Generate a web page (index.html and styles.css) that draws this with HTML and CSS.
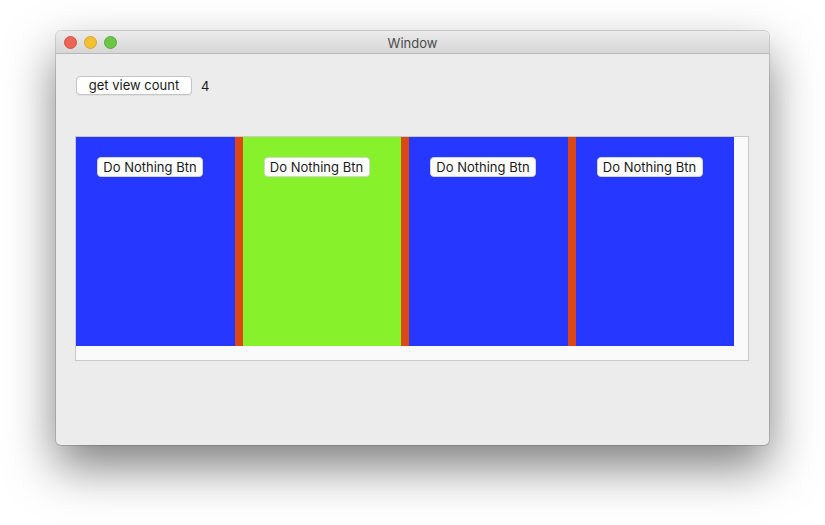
FILE: index.html
```html
<!DOCTYPE html>
<html>
<head>
<meta charset="utf-8">
<link rel="stylesheet" href="styles.css">
</head>
<body>
<div class="window">
  <div class="titlebar">
    <div class="lights">
      <span class="light red"></span>
      <span class="light yellow"></span>
      <span class="light green"></span>
    </div>
    <div class="title">Window</div>
  </div>
  <div class="content">
    <div class="toolbar">
      <button class="btn btn-count">get view count</button>
      <span class="count">4</span>
    </div>
    <div class="scrollview">
      <div class="stack">
        <div class="col blue"><button class="btn btn-do">Do Nothing Btn</button></div>
        <div class="sep"></div>
        <div class="col lime"><button class="btn btn-do">Do Nothing Btn</button></div>
        <div class="sep"></div>
        <div class="col blue"><button class="btn btn-do">Do Nothing Btn</button></div>
        <div class="sep"></div>
        <div class="col blue"><button class="btn btn-do">Do Nothing Btn</button></div>
      </div>
    </div>
  </div>
</div>
</body>
</html>
```

FILE: styles.css
```css
html, body {
  margin: 0;
  padding: 0;
  background: #ffffff;
}
body {
  width: 825px;
  height: 525px;
  overflow: hidden;
  padding: 31px 0 0 56px;
  box-sizing: border-box;
  font-family: Inter, "Liberation Sans", sans-serif;
  font-size: 13px;
  color: #1a1a1a;
}
.window {
  width: 713px;
  height: 414px;
  background: #ececec;
  border-radius: 5px;
  box-shadow: 0 0 0 1px rgba(0,0,0,0.14), 0 22px 48px rgba(0,0,0,0.5);
  overflow: hidden;
  display: flex;
  flex-direction: column;
}
.titlebar {
  height: 22px;
  background: linear-gradient(#ebebeb, #d6d6d6);
  border-bottom: 1px solid #b9b9b9;
  position: relative;
  display: flex;
  align-items: center;
  justify-content: center;
  flex-shrink: 0;
}
.lights {
  position: absolute;
  left: 8px;
  top: 5px;
  display: flex;
  gap: 7px;
}
.light {
  width: 13px;
  height: 13px;
  border-radius: 50%;
  box-sizing: border-box;
}
.red { background: #ec6559; border: 1px solid #d6503f; }
.yellow { background: #f3c031; border: 1px solid #d9a42a; }
.green { background: #6cc547; border: 1px solid #55ac36; }
.title {
  font-size: 13px;
  color: #4b4b4b;
  padding-top: 1px;
}
.content {
  padding: 22px 19px 0 19px;
}
.toolbar {
  display: flex;
  align-items: center;
  height: 19px;
}
.btn {
  font-family: Inter, "Liberation Sans", sans-serif;
  font-size: 13px;
  color: #1a1a1a;
  background: #ffffff;
  border: 1px solid #c4c4c4;
  border-radius: 4px;
  padding: 0;
  margin: 0;
  box-sizing: border-box;
  line-height: 1;
  display: flex;
  align-items: center;
  justify-content: center;
}
.btn-count {
  width: 116px;
  height: 19px;
  margin-left: 1px;
  box-shadow: 0 1px 0 rgba(0,0,0,0.05);
}
.count {
  margin-left: 9px;
  font-size: 13px;
  color: #1a1a1a;
}
.scrollview {
  margin-top: 41px;
  width: 674px;
  height: 225px;
  box-sizing: border-box;
  border: 1px solid #c9c9c9;
  background: #fafafa;
  padding: 0 14px 14px 0;
}
.stack {
  display: flex;
  height: 209px;
  width: 658px;
}
.col {
  width: 158.5px;
  flex-shrink: 0;
  padding: 20px 0 0 21px;
  box-sizing: border-box;
}
.sep {
  width: 8px;
  flex-shrink: 0;
  background: #dd4713;
}
.blue { background: #2637ff; }
.lime { background: #87f22b; }
.btn-do {
  width: 106px;
  height: 20px;
  border: 1px solid #d4d4d4;
}
```
